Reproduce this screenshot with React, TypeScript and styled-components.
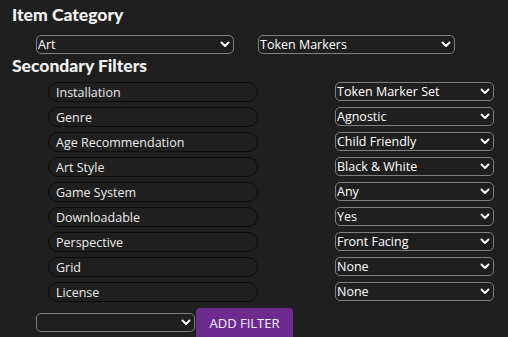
import React from "react";
import styled, { createGlobalStyle } from "styled-components";

const GlobalStyle = createGlobalStyle`
  html, body {
    margin: 0;
    padding: 0;
    background: #1f1f1f;
  }
`;

const Page = styled.div`
  width: 508px;
  height: 337px;
  overflow: hidden;
  background: #1f1f1f;
  color: #eeeeee;
  padding: 3px 0 0 12px;
  box-sizing: border-box;
  font-family: "Open Sans", "Noto Sans", sans-serif;
`;

const Heading = styled.h2`
  margin: 0;
  font-family: "Lato", "Noto Sans", sans-serif;
  font-weight: 900;
  font-size: 17.5px;
  line-height: 24px;
  color: #f2f2f2;
`;

const CategoryRow = styled.div`
  display: flex;
  gap: 24px;
  padding: 8px 0 0 24px;
`;

const FilterList = styled.div`
  display: grid;
  grid-template-columns: 210px 159px;
  column-gap: 77px;
  row-gap: 5px;
  padding: 4px 0 0 36px;
  align-items: start;
`;

const FilterName = styled.div`
  display: flex;
  align-items: center;
  height: 20px;
  box-sizing: border-box;
  border: 1px solid #0c0c0c;
  border-radius: 10px;
  padding: 0 7px;
  font-size: 12.5px;
  color: #ececec;
  font-family: "Open Sans", sans-serif;
`;

const SelectWrap = styled.div<{ $w: number }>`
  position: relative;
  width: ${(p) => p.$w}px;
  height: 19px;
`;

const NativeSelect = styled.select`
  display: block;
  appearance: none;
  width: 100%;
  height: 100%;
  box-sizing: border-box;
  background: #1f1f1f;
  color: #ffffff;
  border: 1px solid #808080;
  border-radius: 5px;
  padding: 0 18px 0 1px;
  font-family: "Open Sans", sans-serif;
  font-size: 12.5px;
  line-height: 17px;
  outline: none;
`;

const Chevron = styled.svg`
  position: absolute;
  right: 4px;
  top: 6px;
  width: 10px;
  height: 7px;
  pointer-events: none;
`;

const AddRow = styled.div`
  display: flex;
  align-items: flex-start;
  gap: 1px;
  padding: 6px 0 0 24px;
`;

const BottomSelect = styled(SelectWrap)`
  margin-top: 5px;
`;

const AddButton = styled.button`
  width: 97px;
  height: 34px;
  border: none;
  border-radius: 4px 4px 0 0;
  background: #6d2b90;
  color: #f4eefa;
  font-family: "Open Sans", sans-serif;
  font-size: 13px;
  padding: 0;
  padding-bottom: 4px;
`;

const ChevronIcon = () => (
  <Chevron viewBox="0 0 10 7">
    <path d="M1.5 1.5 L5 5 L8.5 1.5" fill="none" stroke="#ffffff" strokeWidth="1.9" strokeLinecap="round" strokeLinejoin="round" />
  </Chevron>
);

const Select: React.FC<{ value: string; width: number }> = ({ value, width }) => (
  <SelectWrap $w={width}>
    <NativeSelect defaultValue={value}>
      <option value={value}>{value}</option>
    </NativeSelect>
    <ChevronIcon />
  </SelectWrap>
);

const filters: [string, string][] = [
  ["Installation", "Token Marker Set"],
  ["Genre", "Agnostic"],
  ["Age Recommendation", "Child Friendly"],
  ["Art Style", "Black & White"],
  ["Game System", "Any"],
  ["Downloadable", "Yes"],
  ["Perspective", "Front Facing"],
  ["Grid", "None"],
  ["License", "None"],
];

export default function App() {
  return (
    <Page>
      <GlobalStyle />
      <Heading>Item Category</Heading>
      <CategoryRow>
        <Select value="Art" width={198} />
        <Select value="Token Markers" width={197} />
      </CategoryRow>
      <Heading>Secondary Filters</Heading>
      <FilterList>
        {filters.map(([name, value]) => (
          <React.Fragment key={name}>
            <FilterName>{name}</FilterName>
            <Select value={value} width={159} />
          </React.Fragment>
        ))}
      </FilterList>
      <AddRow>
        <BottomSelect $w={159}>
          <NativeSelect defaultValue="">
            <option value=""></option>
          </NativeSelect>
          <ChevronIcon />
        </BottomSelect>
        <AddButton>ADD FILTER</AddButton>
      </AddRow>
    </Page>
  );
}
